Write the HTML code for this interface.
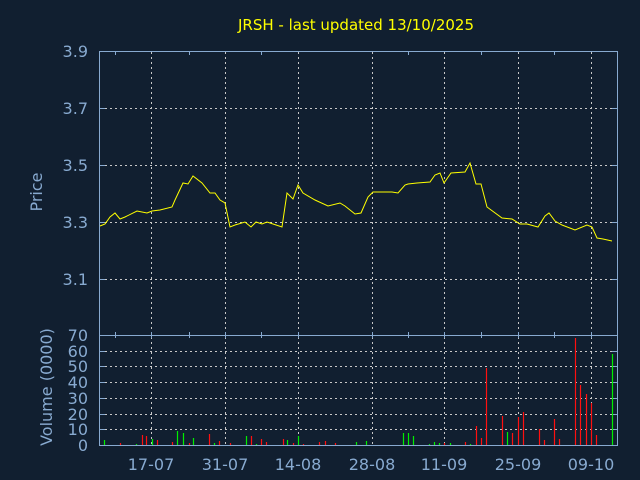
<!DOCTYPE html>
<html><head><meta charset="utf-8"><style>
html,body{margin:0;padding:0;background:#111f30;}
svg{display:block}
text{font-family:"DejaVu Sans","Liberation Sans",sans-serif;}
</style></head><body>
<svg width="640" height="480" viewBox="0 0 640 480" xmlns="http://www.w3.org/2000/svg">
<rect width="640" height="480" fill="#111f30"/>
<text x="356" y="30" fill="#ffff00" font-size="15" text-anchor="middle">JRSH - last updated 13/10/2025</text>
<g stroke="#c8c8c8" stroke-width="1" stroke-dasharray="2,3" fill="none">
<line x1="100" y1="108.5" x2="617" y2="108.5"/>
<line x1="100" y1="165.5" x2="617" y2="165.5"/>
<line x1="100" y1="222.5" x2="617" y2="222.5"/>
<line x1="100" y1="279.5" x2="617" y2="279.5"/>
<line x1="100" y1="351.5" x2="617" y2="351.5"/>
<line x1="100" y1="366.5" x2="617" y2="366.5"/>
<line x1="100" y1="382.5" x2="617" y2="382.5"/>
<line x1="100" y1="398.5" x2="617" y2="398.5"/>
<line x1="100" y1="414.5" x2="617" y2="414.5"/>
<line x1="100" y1="429.5" x2="617" y2="429.5"/>
<line x1="151.5" y1="52" x2="151.5" y2="445"/>
<line x1="225.5" y1="52" x2="225.5" y2="445"/>
<line x1="298.5" y1="52" x2="298.5" y2="445"/>
<line x1="372.5" y1="52" x2="372.5" y2="445"/>
<line x1="444.5" y1="52" x2="444.5" y2="445"/>
<line x1="518.5" y1="52" x2="518.5" y2="445"/>
<line x1="591.5" y1="52" x2="591.5" y2="445"/>
</g>
<g stroke="#88aad0" stroke-width="1" fill="none">
<rect x="99.5" y="51.5" width="518" height="394"/>
<line x1="99.5" y1="335.5" x2="617.5" y2="335.5"/>
<path d="M115.5 52v3M189.5 52v3M261.5 52v3M408.5 52v3M481.5 52v3M554.5 52v3
M115.5 332v6M189.5 332v6M261.5 332v6M408.5 332v6M481.5 332v6M554.5 332v6
M151.5 332v6M225.5 332v6M298.5 332v6M372.5 332v6M444.5 332v6M518.5 332v6M591.5 332v6
M100 108.5h5M100 165.5h5M100 222.5h5M100 279.5h5M612 108.5h5M612 165.5h5M612 222.5h5M612 279.5h5
M612 351.5h5M612 366.5h5M612 382.5h5M612 398.5h5M612 414.5h5M612 429.5h5
M100 351.5h5M100 366.5h5M100 382.5h5M100 398.5h5M100 414.5h5M100 429.5h5"/>
</g>
<polyline fill="none" stroke="#ffff00" stroke-width="1" points="100,226 105,224 110,217 115,213 120,219 125,217 137,211 147,213 152,211 160,210 172,207 175,200 183,183 188,184 193,176 202,183 210,193 215,193 220,200 225,203 230,227 235,225 245,222 251,227 256,222 262,224 267,222 270,223 282,227 287,193 293,199 298,185 303,193 315,200 328,206 340,203 345,206 355,214 361,213 368,197 373,192 380,192 392,192 398,193 405,185 408,184 417,183 430,182 435,175 440,173 444,183 451,173 465,172 470,163 476,184 481,184 487,207 502,218 512,219 520,224 527,224 538,227 545,216 549,213 555,221 562,225 575,230 587,225 592,227 597,238 603,239 612,241"/>
<g stroke-width="1.2">
<g stroke="#00ee00">
<path d="M104.5 445V440M136.5 445V444M152.5 445V439M177.5 445V431M183.5 445V433M193.5 445V438M214.5 445V443M246.5 445V436M256.5 445V444M287.5 445V440M298.5 445V436M403.5 445V433M408.5 445V433M413.5 445V436M429.5 445V444M434.5 445V442M439.5 445V443M450.5 445V443M470.5 445V444M507.5 445V432M612.5 445V354M356.5 445V442M366.5 445V441"/>
</g>
<g stroke="#ff1010">
<path d="M120.5 445V443M142.5 445V435M146.5 445V436M157.5 445V440M172.5 445V442M189.5 445V443M209.5 445V434M219.5 445V441M230.5 445V443M251.5 445V436M261.5 445V439M266.5 445V442M283.5 445V439M293.5 445V443M303.5 445V444M319.5 445V442M325.5 445V441M335.5 445V443M444.5 445V443M465.5 445V442M476.5 445V426M481.5 445V438M486.5 445V368M502.5 445V416M512.5 445V433M518.5 445V417M523.5 445V412M539.5 445V429M544.5 445V440M554.5 445V419M559.5 445V439M575.5 445V338M580.5 445V385M586.5 445V394M591.5 445V403M596.5 445V435"/>
</g>
</g>
<g fill="#88aad0" font-size="16" text-anchor="end">
<text x="88" y="57">3.9</text>
<text x="88" y="114">3.7</text>
<text x="88" y="171">3.5</text>
<text x="88" y="228">3.3</text>
<text x="88" y="285">3.1</text>
<text x="88" y="341">70</text>
<text x="88" y="357">60</text>
<text x="88" y="372">50</text>
<text x="88" y="388">40</text>
<text x="88" y="404">30</text>
<text x="88" y="420">20</text>
<text x="88" y="435">10</text>
<text x="88" y="451">0</text>
</g>
<g fill="#88aad0" font-size="16" text-anchor="middle">
<text x="151" y="470">17-07</text>
<text x="225" y="470">31-07</text>
<text x="298" y="470">14-08</text>
<text x="372" y="470">28-08</text>
<text x="444" y="470">11-09</text>
<text x="518" y="470">25-09</text>
<text x="591" y="470">09-10</text>
<text transform="translate(42,192) rotate(-90)">Price</text>
<text transform="translate(52,387) rotate(-90)">Volume (0000)</text>
</g>
</svg>
</body></html>
